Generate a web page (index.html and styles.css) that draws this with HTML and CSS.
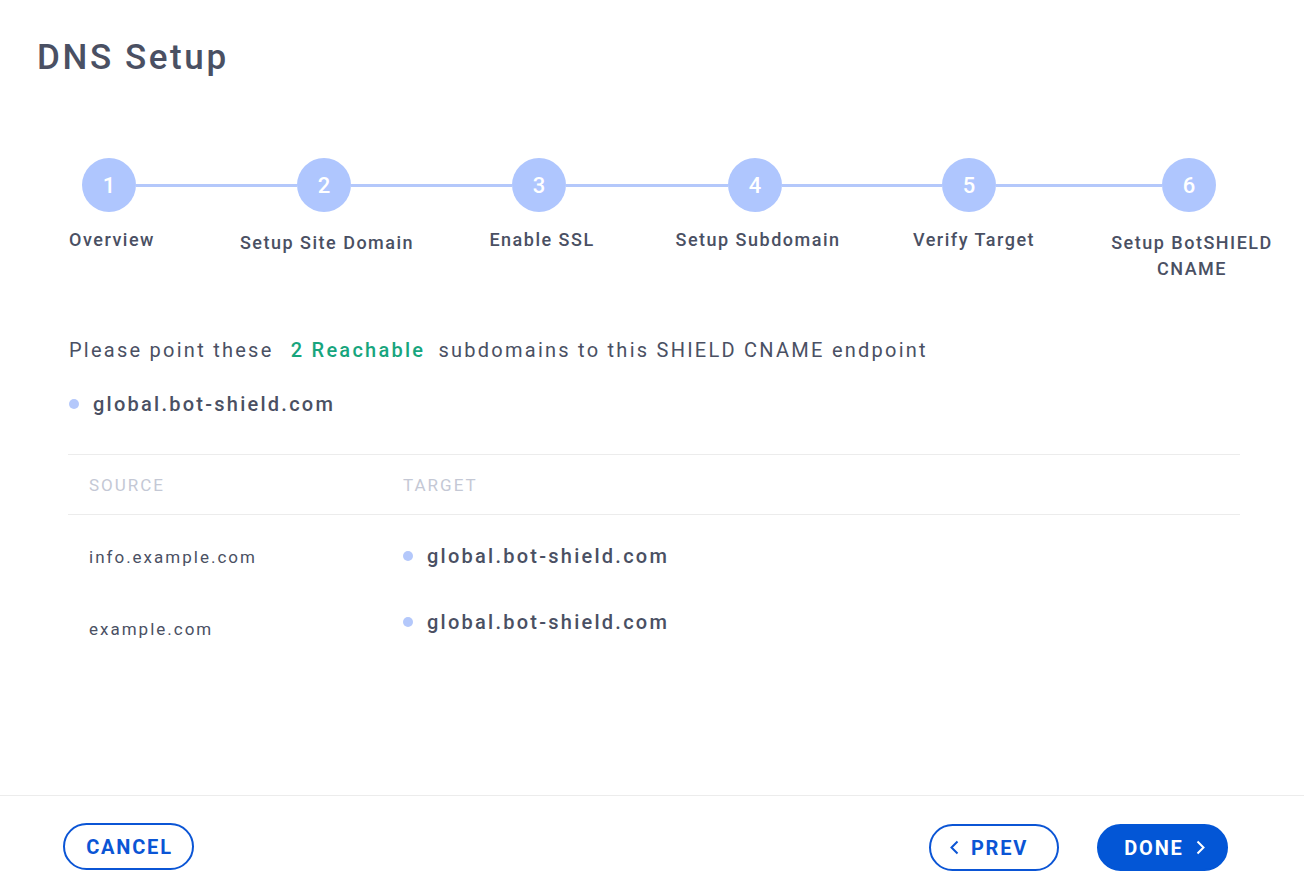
FILE: index.html
```html
<!DOCTYPE html>
<html lang="en">
<head>
<meta charset="utf-8">
<title>DNS Setup</title>
<link rel="stylesheet" href="styles.css">
</head>
<body>
<div class="page">
  <main class="main">
    <h1 class="title">DNS Setup</h1>

    <ol class="stepper">
      <li class="step step--first">
        <div class="track"><span class="seg"></span><span class="circle">1</span><span class="seg"></span></div>
        <div class="label">Overview</div>
      </li>
      <li class="step">
        <div class="track"><span class="seg"></span><span class="circle">2</span><span class="seg"></span></div>
        <div class="label label--low">Setup Site Domain</div>
      </li>
      <li class="step">
        <div class="track"><span class="seg"></span><span class="circle">3</span><span class="seg"></span></div>
        <div class="label">Enable SSL</div>
      </li>
      <li class="step">
        <div class="track"><span class="seg"></span><span class="circle">4</span><span class="seg"></span></div>
        <div class="label">Setup Subdomain</div>
      </li>
      <li class="step">
        <div class="track"><span class="seg"></span><span class="circle">5</span><span class="seg"></span></div>
        <div class="label label--wide">Verify Target</div>
      </li>
      <li class="step step--last">
        <div class="track"><span class="seg"></span><span class="circle">6</span><span class="seg"></span></div>
        <div class="label label--low">Setup BotSHIELD<br>CNAME</div>
      </li>
    </ol>

    <section class="content">
      <p class="message">Please point these <span class="reach">2 Reachable</span> subdomains to this SHIELD CNAME endpoint</p>
      <div class="endpoint"><span class="dot"></span><span class="host">global.bot-shield.com</span></div>

      <div class="table">
        <div class="thead">
          <div class="th th--src">SOURCE</div>
          <div class="th">TARGET</div>
        </div>
        <div class="tr tr--first">
          <div class="td td--src">info.example.com</div>
          <div class="td td--tgt"><span class="dot"></span><span class="host">global.bot-shield.com</span></div>
        </div>
        <div class="tr tr--second">
          <div class="td td--src">example.com</div>
          <div class="td td--tgt"><span class="dot"></span><span class="host">global.bot-shield.com</span></div>
        </div>
      </div>
    </section>
  </main>

  <footer class="footer">
    <button class="btn btn--outline btn--cancel">CANCEL</button>
    <div class="nav">
      <button class="btn btn--outline btn--prev">
        <svg class="chev" width="9" height="15" viewBox="0 0 9 15"><polyline points="7.5,1.5 1.5,7.5 7.5,13.5" fill="none" stroke="currentColor" stroke-width="2"/></svg>
        <span>PREV</span>
      </button>
      <button class="btn btn--fill btn--done">
        <span>DONE</span>
        <svg class="chev" width="9" height="15" viewBox="0 0 9 15"><polyline points="1.5,1.5 7.5,7.5 1.5,13.5" fill="none" stroke="currentColor" stroke-width="2"/></svg>
      </button>
    </div>
  </footer>
</div>
</body>
</html>
```

FILE: styles.css
```css
* { box-sizing: border-box; }

html, body {
  margin: 0;
  padding: 0;
  background: #ffffff;
}

body {
  font-family: Roboto, "Liberation Sans", Arial, sans-serif;
  color: #4a5063;
}

.page {
  min-height: 100vh;
  display: flex;
  flex-direction: column;
}

.main {
  flex: 1;
}

.title {
  margin: 0;
  padding: 38px 0 0 37px;
  font-size: 35px;
  line-height: 40px;
  font-weight: 500;
  letter-spacing: 2.6px;
  color: #4a5063;
}

/* Stepper */
.stepper {
  list-style: none;
  margin: 80px 0 0 0;
  padding: 0 0 0 2px;
  display: grid;
  grid-template-columns: 214px 216px 214px 218px 210px 230px;
  align-items: start;
}

.step {
  display: flex;
  flex-direction: column;
  align-items: center;
}

.track {
  width: 100%;
  display: flex;
  align-items: center;
  height: 54px;
}

.seg {
  flex: 1;
  height: 3px;
  background: #b4c8fb;
}

.step--first .seg:first-child,
.step--last .seg:last-child {
  background: transparent;
}

.circle {
  flex: none;
  width: 54px;
  height: 54px;
  border-radius: 50%;
  background: #afc6fe;
  color: #ffffff;
  font-size: 22px;
  font-weight: 500;
  display: flex;
  align-items: center;
  justify-content: center;
}

.label {
  margin-top: 15px;
  padding-left: 6px;
  font-size: 18px;
  line-height: 26px;
  font-weight: 500;
  letter-spacing: 1.5px;
  text-align: center;
  color: #4a5063;
  white-space: nowrap;
}

.label--low {
  margin-top: 18px;
}

.label--wide {
  padding-left: 10px;
}

/* Content */
.content {
  padding: 0 64px 0 68px;
}

.message {
  margin: 54px 0 0 1px;
  font-size: 20px;
  line-height: 28px;
  letter-spacing: 2.25px;
  color: #4a5063;
  white-space: pre;
}

.reach {
  color: #17a57d;
  font-weight: 500;
  margin: 0 6px 0 10px;
}

.endpoint {
  margin-top: 26px;
  display: flex;
  align-items: center;
  height: 28px;
  padding-left: 1px;
}

.dot {
  flex: none;
  width: 10px;
  height: 10px;
  border-radius: 50%;
  background: #b4c8fb;
  margin-right: 14px;
}

.host {
  font-size: 20px;
  line-height: 28px;
  font-weight: 500;
  letter-spacing: 2.25px;
  color: #4a5063;
}

/* Table */
.table {
  margin-top: 36px;
  border-top: 1px solid #ececec;
}

.thead {
  display: grid;
  grid-template-columns: 314px 1fr;
  height: 60px;
  align-items: center;
  border-bottom: 1px solid #ececec;
}

.th {
  font-size: 17px;
  line-height: 20px;
  letter-spacing: 2px;
  color: #c4c8d5;
  padding-left: 21px;
}

.tr {
  display: grid;
  grid-template-columns: 314px 1fr;
  height: 66px;
  align-items: start;
}

.tr--first {
  height: 93px;
  padding-top: 27px;
}

.td {
  padding-left: 21px;
  line-height: 28px;
}

.td--src {
  font-size: 17px;
  letter-spacing: 2px;
  color: #4a5063;
  padding-top: 1px;
}

.tr--second .td--src {
  padding-top: 7px;
}

.td--tgt {
  display: flex;
  align-items: center;
}

/* Footer */
.footer {
  height: 99px;
  border-top: 1px solid #ececec;
  display: flex;
  justify-content: space-between;
  align-items: flex-start;
  padding: 28px 76px 0 63px;
}

.nav {
  display: flex;
  gap: 38px;
}

.btn {
  height: 47px;
  width: 131px;
  border-radius: 24px;
  font-family: Roboto, "Liberation Sans", Arial, sans-serif;
  font-size: 20px;
  font-weight: 700;
  letter-spacing: 1.8px;
  display: flex;
  align-items: center;
  justify-content: center;
  gap: 12px;
  cursor: pointer;
  padding: 0;
}

.btn--cancel {
  margin-top: -1px;
  padding-left: 2px;
}

.btn--outline {
  background: #ffffff;
  border: 2px solid #0b55d5;
  color: #0b55d5;
}

.btn--fill {
  background: #0356d6;
  border: 2px solid #0356d6;
  color: #ffffff;
}

.btn--prev {
  width: 130px;
  padding-right: 10px;
}

.btn--done {
  padding-left: 4px;
}

.chev {
  display: block;
}
```
